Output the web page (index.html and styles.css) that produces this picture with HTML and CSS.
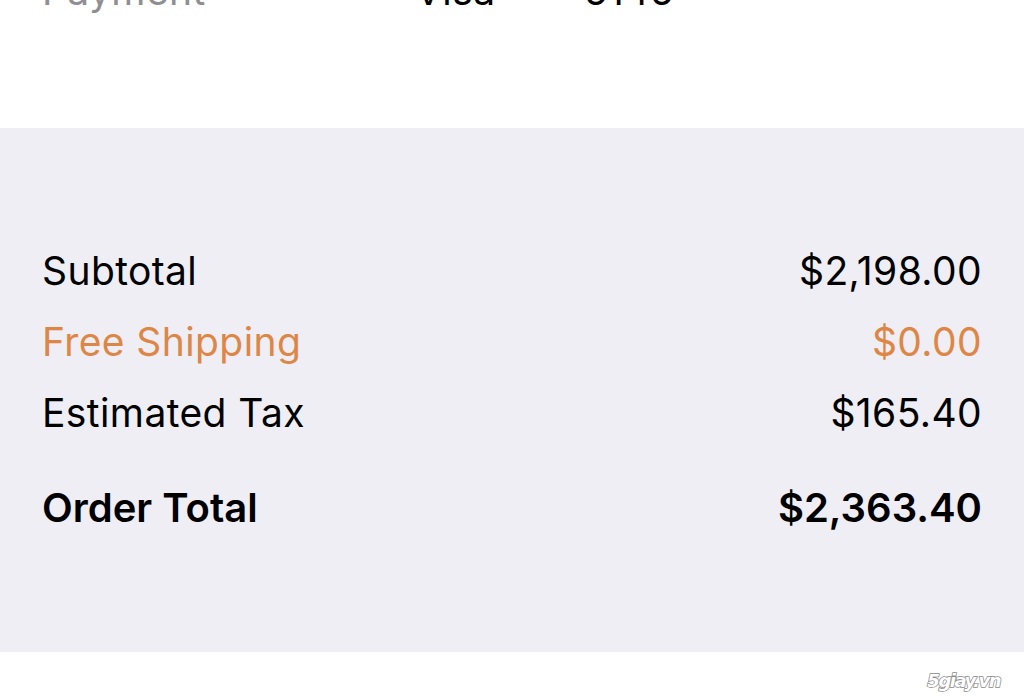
FILE: index.html
```html
<!DOCTYPE html>
<html lang="en">
  <head>
    <meta charset="UTF-8" />
    <meta name="viewport" content="width=device-width, initial-scale=1.0" />
    <title>Order Summary</title>
    <link rel="stylesheet" href="styles.css">
  </head>
  <body>
    <div class="info-section">
      <div class="info-row">
        <span class="info-label">Payment</span>
        <span class="info-value">Visa <span class="dots">••••</span> 5145</span>
      </div>
    </div>

    <div class="summary">
      <div class="summary-row">
        <span>Subtotal</span>
        <span>$2,198.00</span>
      </div>
      <div class="summary-row shipping">
        <span>Free Shipping</span>
        <span>$0.00</span>
      </div>
      <div class="summary-row">
        <span>Estimated Tax</span>
        <span>$165.40</span>
      </div>
      <div class="summary-row total">
        <span>Order Total</span>
        <span>$2,363.40</span>
      </div>
    </div>

    <div class="footer"></div>

    <div class="watermark">5giay.vn</div>
  </body>
</html>
```

FILE: styles.css
```css
html, body {
  height: 100%;
}

body {
  font-family: Inter, "Noto Sans", sans-serif;
  background-color: #fff;
  color: #000;
  margin: 0;
  padding: 0;
  overflow: hidden;
}

.info-section {
  display: flow-root;
  height: 128px;
  background-color: #fff;
}

.info-row {
  display: flex;
  margin-top: -45px;
  padding: 0 42px;
  font-size: 39px;
  letter-spacing: 0.4px;
  line-height: 71px;
}

.info-label {
  width: 373px;
  color: #8e8e93;
}

.info-value {
  color: #000;
}

.dots {
  letter-spacing: -7px;
  margin-right: 6px;
}

.summary {
  background-color: #efeef4;
  padding: 107px 42px 109px 42px;
}

.summary-row {
  display: flex;
  justify-content: space-between;
  font-size: 39px;
  letter-spacing: 0.4px;
  line-height: 71px;
}

.shipping {
  color: #de8646;
}

.total {
  margin-top: 24px;
  font-size: 40px;
  font-weight: 600;
  letter-spacing: 0;
}

.footer {
  height: 60px;
  background-color: #fff;
}

.watermark {
  position: absolute;
  right: 24px;
  bottom: 8px;
  font-family: "DejaVu Sans", sans-serif;
  font-size: 18px;
  font-weight: bold;
  font-style: italic;
  letter-spacing: -1.5px;
  color: #fff;
  -webkit-text-stroke: 1.5px #8a8a8a;
  paint-order: stroke fill;
}
```
